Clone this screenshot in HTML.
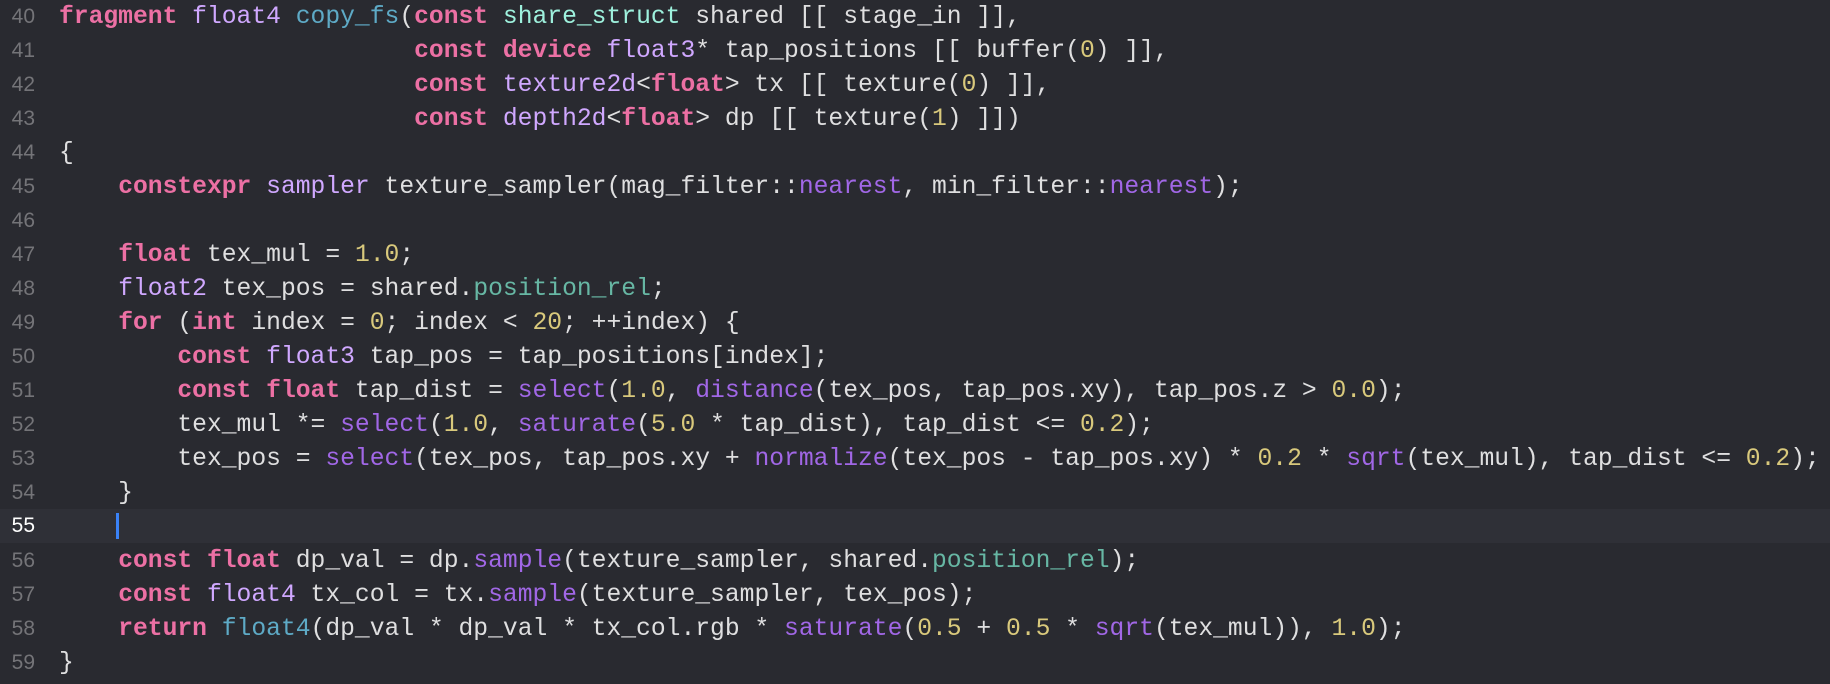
<!DOCTYPE html>
<html><head><meta charset="utf-8"><style>
html,body{margin:0;padding:0;background:#292a30;width:1830px;height:684px;overflow:hidden}
.l{position:absolute;left:0;width:1830px;height:34px;line-height:34px}
.n{position:absolute;right:1795px;font-family:"Liberation Sans",sans-serif;font-size:21px;color:#747478;top:0}
.c{position:absolute;left:59px;top:0;font-family:"Liberation Mono",monospace;font-size:24.67px;color:#dfdfe0;white-space:pre}
.k{color:#ec70a4;font-weight:bold}
.t{color:#d0a8ff}
.f{color:#5eaac6}
.s{color:#9ef1dd}
.m{color:#a88ae6;color:#a167e6}
.d{color:#d9c97c}
.p{color:#67b7a4}
.hl{background:#2f3037}
.hl .n{color:#ffffff}
.cur{position:absolute;left:116px;top:4px;width:3px;height:26px;background:#3a82f7}
</style></head><body>
<div class="l" style="top:0"><span class="n">40</span><span class="c"><span class="k">fragment</span> <span class="t">float4</span> <span class="f">copy_fs</span>(<span class="k">const</span> <span class="s">share_struct</span> shared [[ stage_in ]],</span></div>
<div class="l" style="top:34px"><span class="n">41</span><span class="c">                        <span class="k">const</span> <span class="k">device</span> <span class="t">float3</span>* tap_positions [[ buffer(<span class="d">0</span>) ]],</span></div>
<div class="l" style="top:68px"><span class="n">42</span><span class="c">                        <span class="k">const</span> <span class="t">texture2d</span>&lt;<span class="k">float</span>&gt; tx [[ texture(<span class="d">0</span>) ]],</span></div>
<div class="l" style="top:102px"><span class="n">43</span><span class="c">                        <span class="k">const</span> <span class="t">depth2d</span>&lt;<span class="k">float</span>&gt; dp [[ texture(<span class="d">1</span>) ]])</span></div>
<div class="l" style="top:136px"><span class="n">44</span><span class="c">{</span></div>
<div class="l" style="top:170px"><span class="n">45</span><span class="c">    <span class="k">constexpr</span> <span class="t">sampler</span> texture_sampler(mag_filter::<span class="m">nearest</span>, min_filter::<span class="m">nearest</span>);</span></div>
<div class="l" style="top:204px"><span class="n">46</span><span class="c"></span></div>
<div class="l" style="top:238px"><span class="n">47</span><span class="c">    <span class="k">float</span> tex_mul = <span class="d">1.0</span>;</span></div>
<div class="l" style="top:272px"><span class="n">48</span><span class="c">    <span class="t">float2</span> tex_pos = shared.<span class="p">position_rel</span>;</span></div>
<div class="l" style="top:306px"><span class="n">49</span><span class="c">    <span class="k">for</span> (<span class="k">int</span> index = <span class="d">0</span>; index &lt; <span class="d">20</span>; ++index) {</span></div>
<div class="l" style="top:340px"><span class="n">50</span><span class="c">        <span class="k">const</span> <span class="t">float3</span> tap_pos = tap_positions[index];</span></div>
<div class="l" style="top:374px"><span class="n">51</span><span class="c">        <span class="k">const</span> <span class="k">float</span> tap_dist = <span class="m">select</span>(<span class="d">1.0</span>, <span class="m">distance</span>(tex_pos, tap_pos.xy), tap_pos.z &gt; <span class="d">0.0</span>);</span></div>
<div class="l" style="top:408px"><span class="n">52</span><span class="c">        tex_mul *= <span class="m">select</span>(<span class="d">1.0</span>, <span class="m">saturate</span>(<span class="d">5.0</span> * tap_dist), tap_dist &lt;= <span class="d">0.2</span>);</span></div>
<div class="l" style="top:442px"><span class="n">53</span><span class="c">        tex_pos = <span class="m">select</span>(tex_pos, tap_pos.xy + <span class="m">normalize</span>(tex_pos - tap_pos.xy) * <span class="d">0.2</span> * <span class="m">sqrt</span>(tex_mul), tap_dist &lt;= <span class="d">0.2</span>);</span></div>
<div class="l" style="top:476px"><span class="n">54</span><span class="c">    }</span></div>
<div class="l hl" style="top:509px"><span class="n">55</span><span class="cur"></span></div>
<div class="l" style="top:544px"><span class="n">56</span><span class="c">    <span class="k">const</span> <span class="k">float</span> dp_val = dp.<span class="m">sample</span>(texture_sampler, shared.<span class="p">position_rel</span>);</span></div>
<div class="l" style="top:578px"><span class="n">57</span><span class="c">    <span class="k">const</span> <span class="t">float4</span> tx_col = tx.<span class="m">sample</span>(texture_sampler, tex_pos);</span></div>
<div class="l" style="top:612px"><span class="n">58</span><span class="c">    <span class="k">return</span> <span class="f">float4</span>(dp_val * dp_val * tx_col.rgb * <span class="m">saturate</span>(<span class="d">0.5</span> + <span class="d">0.5</span> * <span class="m">sqrt</span>(tex_mul)), <span class="d">1.0</span>);</span></div>
<div class="l" style="top:646px"><span class="n">59</span><span class="c">}</span></div>
</body></html>
